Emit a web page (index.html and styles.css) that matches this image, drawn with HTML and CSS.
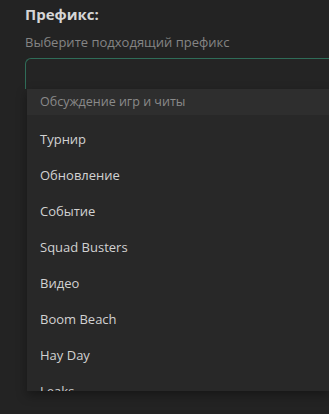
FILE: index.html
```html
<!DOCTYPE html>
<html lang="ru">
<head>
    <meta charset="UTF-8">
    <meta name="viewport" content="width=device-width, initial-scale=1.0">
    <title>Префикс</title>
    <link rel="stylesheet" href="styles.css">
</head>
<body>
    <div class="field">
        <h2 class="label">Префикс:</h2>
        <p class="hint">Выберите подходящий префикс</p>
        <div class="select"></div>
        <div class="menu">
            <div class="group">Обсуждение игр и читы</div>
            <ul class="options">
                <li>Турнир</li>
                <li>Обновление</li>
                <li>Событие</li>
                <li>Squad Busters</li>
                <li>Видео</li>
                <li>Boom Beach</li>
                <li>Hay Day</li>
                <li>Leaks</li>
            </ul>
        </div>
    </div>
</body>
</html>
```

FILE: styles.css
```css
html, body {
    margin: 0;
    background: #232323;
    height: 100%;
}
body {
    font-family: 'Open Sans', 'Noto Sans', sans-serif;
    color: #d4d4d4;
}
.field {
    padding: 4px 0 0 25px;
}
.label {
    margin: 0;
    font-size: 15px;
    font-weight: 700;
    line-height: 20px;
    color: #d6d6d6;
}
.hint {
    margin: 9px 0 0;
    font-size: 13px;
    line-height: 18px;
    color: #858585;
}
.select {
    margin-top: 7px;
    height: 30px;
    border: 1px solid #2f6c58;
    border-bottom: none;
    border-right: none;
    border-radius: 6px 0 0 0;
    background: #242424;
}
.menu {
    margin-left: 2px;
    height: 302px;
    overflow: hidden;
    background: #282828;
    box-shadow: 0 4px 10px rgba(0, 0, 0, 0.35);
}
.group {
    height: 26px;
    line-height: 26px;
    padding-left: 13px;
    background: #2e2e2e;
    font-size: 12.5px;
    color: #8a8a8a;
}
.options {
    list-style: none;
    margin: 0;
    padding: 6px 0 0;
}
.options li {
    height: 36px;
    line-height: 36px;
    padding-left: 13px;
    font-size: 13px;
    color: #d2d2d2;
}
```
